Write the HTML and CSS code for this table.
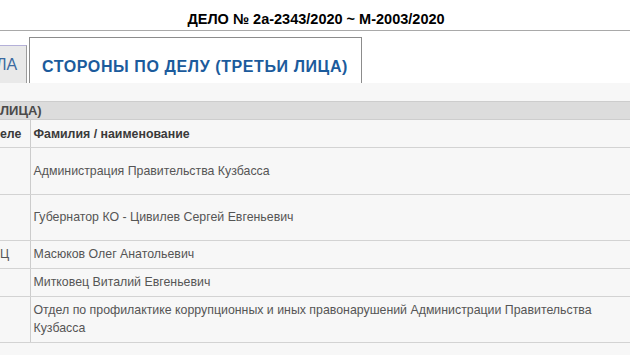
FILE: index.html
```html
<!DOCTYPE html>
<html lang="ru">
<head>
<meta charset="utf-8">
<title>Дело № 2а-2343/2020</title>
<link rel="stylesheet" href="styles.css">
</head>
<body>
<header class="case-title">ДЕЛО № 2а-2343/2020 ~ М-2003/2020</header>
<nav class="tabs">
  <div class="tab">ЛА</div>
  <div class="tab tab-active">СТОРОНЫ ПО ДЕЛУ (ТРЕТЬИ ЛИЦА)</div>
</nav>
<section class="panel">
  <div class="panel-title">ЛИЦА)</div>
  <table class="parties">
    <colgroup><col class="col-kind"><col class="col-name"></colgroup>
    <thead>
      <tr><th class="kind">еле</th><th>Фамилия / наименование</th></tr>
    </thead>
    <tbody>
      <tr><td class="kind"><div class="two-lines first"></div></td><td>Администрация Правительства Кузбасса</td></tr>
      <tr><td class="kind"><div class="two-lines"></div></td><td>Губернатор КО - Цивилев Сергей Евгеньевич</td></tr>
      <tr><td class="kind">Ц</td><td>Масюков Олег Анатольевич</td></tr>
      <tr><td class="kind"></td><td>Митковец Виталий Евгеньевич</td></tr>
      <tr><td class="kind"></td><td>Отдел по профилактике коррупционных и иных правонарушений Администрации Правительства Кузбасса</td></tr>
    </tbody>
  </table>
</section>
</body>
</html>
```

FILE: styles.css
```css
html, body {
  margin: 0;
  padding: 0;
  background: #ffffff;
  font-family: "Liberation Sans", Arial, sans-serif;
  overflow: hidden;
}

.case-title {
  height: 30px;
  line-height: 38px;
  font-size: 14.5px;
  font-weight: bold;
  color: #000;
  text-align: center;
  border-bottom: 1px solid #a9a9a9;
  padding-left: 2px;
}

.tabs {
  display: flex;
  align-items: flex-end;
  padding-top: 6px;
}

.tab {
  width: 26px;
  margin-right: 2px;
  padding: 10px 0 9px 0;
  line-height: 18px;
  font-size: 16px;
  color: #3b6aa0;
  background: #e9e9e9;
  border: 1px solid #9c9c9c;
  border-left: none;
  border-bottom: none;
  border-top-color: #b4b0d8;
  white-space: nowrap;
  overflow: hidden;
  text-indent: -4px;
}

.tab-active {
  width: auto;
  margin-right: 0;
  padding: 20px 13px 7px 12px;
  font-weight: bold;
  color: #1b5b9c;
  background: #ffffff;
  border: 1px solid #8c8c8c;
  border-bottom: none;
  letter-spacing: 0.6px;
  text-indent: 0;
}

.panel {
  background: #f7f7f7;
  padding-top: 18px;
  padding-bottom: 20px;
}

.panel-title {
  background: #dcdcdc;
  border-top: 1px solid #cdcdcd;
  border-bottom: 1px solid #cdcdcd;
  line-height: 17px;
  font-size: 13px;
  font-weight: bold;
  color: #4a4a4a;
  white-space: nowrap;
}

.parties {
  width: 100%;
  border-collapse: collapse;
  font-size: 12.35px;
  color: #555555;
}

.col-kind { width: 30px; }

.parties th,
.parties td {
  padding: 4px 4px 5px 3px;
  line-height: 18px;
  text-align: left;
  vertical-align: middle;
  border-bottom: 1px solid #d3d3d3;
}

.parties th {
  padding-top: 5px;
  padding-bottom: 4px;
  font-weight: bold;
  color: #3a3a3a;
}

.parties .kind {
  padding-left: 0;
  padding-right: 0;
  border-right: 1px solid #cccccc;
  white-space: nowrap;
  overflow: hidden;
}

.two-lines { height: 36px; }
.two-lines.first { height: 37px; }
```
